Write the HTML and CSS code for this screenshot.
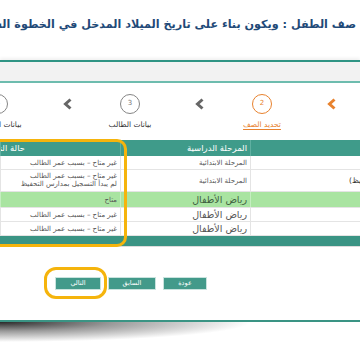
FILE: index.html
```html
<!DOCTYPE html>
<html lang="ar" dir="rtl">
<head>
<meta charset="utf-8">
<link rel="stylesheet" href="styles.css">
</head>
<body>
<div class="page">
  <h1 class="title">صف الطفل : ويكون بناء على تاريخ الميلاد المدخل في الخطوة السابقة</h1>
  <div class="band"></div>
  <div class="steps">
    <div class="chev chev-active"><svg width="10" height="12" viewBox="0 0 10 12"><polyline points="7.5,1.5 2.5,6 7.5,10.5" fill="none" stroke="currentColor" stroke-width="3"/></svg></div>
    <div class="step step-active"><span class="circle">2</span><span class="label">تحديد الصف</span></div>
    <div class="chev"><svg width="10" height="12" viewBox="0 0 10 12"><polyline points="7.5,1.5 2.5,6 7.5,10.5" fill="none" stroke="currentColor" stroke-width="3"/></svg></div>
    <div class="step"><span class="circle">3</span><span class="label">بيانات الطالب</span></div>
    <div class="chev"><svg width="10" height="12" viewBox="0 0 10 12"><polyline points="7.5,1.5 2.5,6 7.5,10.5" fill="none" stroke="currentColor" stroke-width="3"/></svg></div>
    <div class="step"><span class="circle">4</span><span class="label">بيانات المدرسة</span></div>
  </div>
  <div class="table-wrap">
    <div class="row head">
      <div class="cell"></div>
      <div class="cell stage">المرحلة الدراسية</div>
      <div class="cell status-head">حالة التسجيل</div>
    </div>
    <div class="row r1">
      <div class="cell"></div>
      <div class="cell stage small">المرحلة الابتدائية</div>
      <div class="cell status">غير متاح – بسبب عمر الطالب</div>
    </div>
    <div class="row r2">
      <div class="cell track">الابتدائية (تحفيظ)</div>
      <div class="cell stage small">المرحلة الابتدائية</div>
      <div class="cell status two">غير متاح – بسبب عمر الطالب<br>لم يبدأ التسجيل بمدارس التحفيظ</div>
    </div>
    <div class="row ok">
      <div class="cell"></div>
      <div class="cell stage big">رياض الأطفال</div>
      <div class="cell status">متاح</div>
    </div>
    <div class="row r1">
      <div class="cell"></div>
      <div class="cell stage big">رياض الأطفال</div>
      <div class="cell status">غير متاح – بسبب عمر الطالب</div>
    </div>
    <div class="row r1">
      <div class="cell"></div>
      <div class="cell stage big">رياض الأطفال</div>
      <div class="cell status">غير متاح – بسبب عمر الطالب</div>
    </div>
    <div class="foot"></div>
    <div class="mark mark-table"></div>
  </div>
  <div class="actions">
    <button class="btn">عودة</button>
    <button class="btn btn-wide">السابق</button>
    <button class="btn btn-next">التالي<span class="mark mark-btn"></span></button>
  </div>
  <div class="rule"></div>
  <div class="curl"></div>
</div>
</body>
</html>
```
FILE: styles.css
```css
html, body {
  margin: 0;
  padding: 0;
  background: #fff;
}
body {
  width: 360px;
  height: 360px;
  overflow: hidden;
  font-family: "DejaVu Sans", sans-serif;
  direction: rtl;
}
.page {
  width: 360px;
  position: relative;
}
.title {
  margin: 0;
  height: 60px;
  box-sizing: border-box;
  padding: 16px 4px 0 0;
  font-size: 11.2px;
  line-height: 18px;
  font-weight: bold;
  color: #1f4a78;
  white-space: nowrap;
  text-align: right;
}
.band {
  height: 19px;
  background: #f2f2f2;
  border-top: 2px solid #2f9484;
  border-bottom: 2px solid #6dbcae;
  box-shadow: 0 -2px 3px rgba(0,0,0,0.06);
}
.steps {
  display: flex;
  direction: rtl;
  padding: 11px 4px 0 0;
  height: 37px;
}
.chev {
  width: 56px;
  flex: none;
  box-sizing: border-box;
  padding-left: 8px;
  display: flex;
  justify-content: center;
  align-items: flex-start;
  padding-top: 4px;
  color: #666;
}
.chev-active { color: #e8822e; }
.step {
  width: 76px;
  flex: none;
  display: flex;
  flex-direction: column;
  align-items: center;
}
.circle {
  width: 20px;
  height: 20px;
  box-sizing: border-box;
  border: 1.5px solid #858585;
  border-radius: 50%;
  font-size: 7px;
  line-height: 17px;
  text-align: center;
  color: #777;
}
.label {
  margin-top: 6px;
  font-size: 7.5px;
  line-height: 10px;
  color: #333;
  white-space: nowrap;
}
.step-active .circle {
  border-color: #e8822e;
  color: #e8822e;
}
.step-active .label {
  color: #e8822e;
  text-decoration: underline;
  text-underline-offset: 2px;
}
.table-wrap {
  position: relative;
  margin-top: 9px;
  border-bottom: 1px solid #dcdcdc;
}
.row {
  display: grid;
  grid-template-columns: 110px 130px 120px;
  border-bottom: 1px solid #e4e4e4;
  color: #555;
}
.cell {
  display: flex;
  align-items: center;
  padding-right: 3px;
  white-space: nowrap;
  overflow: hidden;
  border-left: 1px solid #e4e4e4;
  font-size: 7px;
}
.head {
  height: 16px;
  background: #3f9b8a;
  border-bottom: none;
  color: #fff;
}
.head .cell { border-left-color: #5fb0a1; }
.head .stage { font-size: 8.5px; }
.status-head {
  font-size: 8.5px;
  padding-right: 95px;
}
.r1 { height: 13px; }
.r2 { height: 21px; }
.two {
  line-height: 7.5px;
}
.ok {
  height: 15px;
  background: #a9e4a1;
}
.ok .cell { border-left-color: #c4eec0; }
.ok .stage { color: #3f5f3f; }
.small { font-size: 7px; }
.big { font-size: 9.5px; }
.track {
  justify-content: flex-end;
  padding-right: 0;
  padding-left: 98px;
  font-size: 7.5px;
  color: #333;
}
.foot {
  height: 10px;
  background: #3a9484;
}
.mark {
  position: absolute;
  border: 3px solid #f5b40c;
  pointer-events: none;
}
.mark-table {
  left: -24px;
  top: -1px;
  width: 145px;
  height: 102px;
  border-radius: 10px;
}
.actions {
  display: flex;
  direction: rtl;
  gap: 7px;
  padding-right: 153px;
  margin-top: 30px;
}
.btn {
  position: relative;
  width: 44px;
  height: 13px;
  padding: 0;
  background: #439a8a;
  border: 1px solid #c9e3de;
  color: #fff;
  font-family: "DejaVu Sans", sans-serif;
  font-size: 6.5px;
  line-height: 11px;
  text-align: center;
}
.btn-wide { width: 48px; }
.btn-next { width: 46px; }
.mark-btn {
  left: -12px;
  right: -7px;
  top: -11px;
  bottom: -10px;
  border-radius: 12px;
}
.rule {
  margin-top: 30px;
  height: 2px;
  background: #3a9484;
}
.curl {
  width: 250px;
  height: 20px;
  margin-left: 0;
  margin-right: auto;
  background: radial-gradient(ellipse 100% 100% at 0 0, rgba(30,30,30,0.95), rgba(70,70,70,0.55) 45%, rgba(255,255,255,0) 100%);
}
```
